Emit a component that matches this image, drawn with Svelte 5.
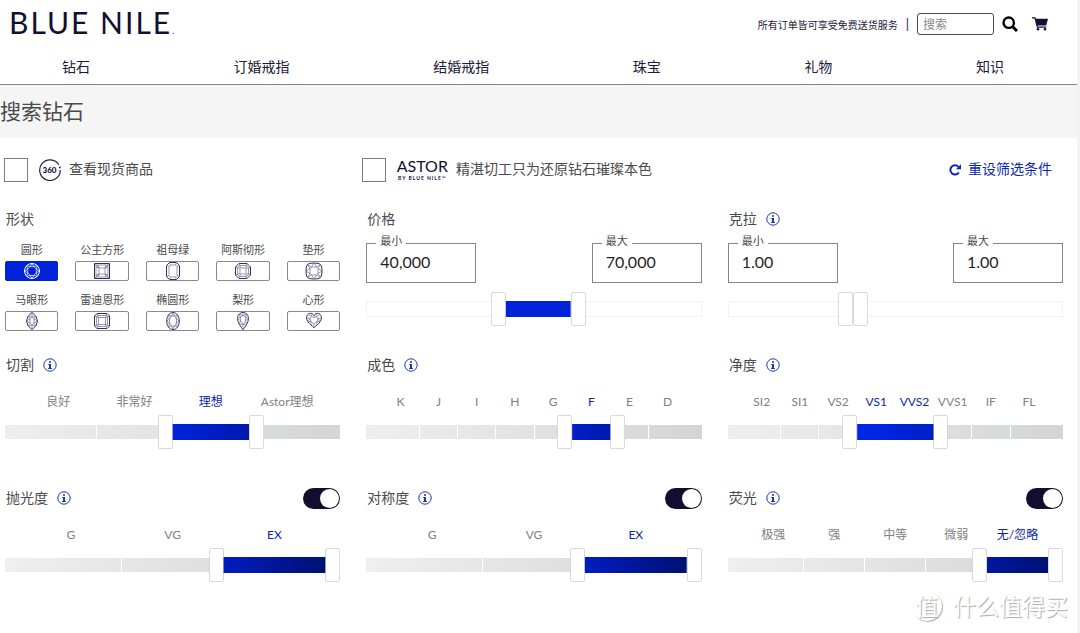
<script lang="ts">
	interface Slider {
		title: string;
		labels: string[];
		low: number;
		high: number;
		toggle?: boolean;
	}

	const navItems = ['钻石', '订婚戒指', '结婚戒指', '珠宝', '礼物', '知识'];

	// outline is the stone's edge, facets are the cut lines inside it
	const shapes = [
		{
			name: '圆形',
			outline: 'M9 1.5a7.5 7.5 0 1 1 0 15a7.5 7.5 0 1 1 0-15z',
			facets:
				'M7.2 4.6h3.6L13.4 7.2v3.6L10.8 13.4H7.2L4.6 10.8V7.2zM7.2 4.6L9 1.5L10.8 4.6L14.3 3.7L13.4 7.2L16.5 9L13.4 10.8L14.3 14.3L10.8 13.4L9 16.5L7.2 13.4L3.7 14.3L4.6 10.8L1.5 9L4.6 7.2L3.7 3.7z'
		},
		{
			name: '公主方形',
			outline: 'M1.5 1.5h15v15h-15z',
			facets:
				'M3 3h12v12H3zM6 6h6v6H6zM1.5 1.5L6 6M16.5 1.5L12 6M1.5 16.5L6 12M16.5 16.5L12 12M3 5L6 6L5 3M13 3L12 6L15 5M3 13L6 12L5 15M13 15L12 12L15 13'
		},
		{
			name: '祖母绿',
			outline: 'M5.5 .5h7L15.5 3.5v11L12.5 17.5h-7L2.5 14.5v-11z',
			facets:
				'M6.5 3h5L13 4.5v9L11.5 15h-5L5 13.5v-9zM5.5 .5L6.5 3M12.5 .5L11.5 3M2.5 3.5L5 4.5M15.5 3.5L13 4.5M2.5 14.5L5 13.5M15.5 14.5L13 13.5M5.5 17.5L6.5 15M12.5 17.5L11.5 15'
		},
		{
			name: '阿斯彻形',
			outline: 'M5 1.5h8L16.5 5v8L13 16.5H5L1.5 13V5z',
			facets:
				'M5.5 3.5h7l2 2v7l-2 2h-7l-2-2v-7zM6.5 6h5L12 6.5v5L11.5 12h-5L6 11.5v-5zM5 1.5L6.5 6M13 1.5L11.5 6M1.5 5L6 6.5M16.5 5L12 6.5M5 16.5L6.5 12M13 16.5L11.5 12M1.5 13L6 11.5M16.5 13L12 11.5'
		},
		{
			name: '垫形',
			outline:
				'M5 1.3Q9 .7 13 1.3Q16.2 1.8 16.7 5Q17.3 9 16.7 13Q16.2 16.2 13 16.7Q9 17.3 5 16.7Q1.8 16.2 1.3 13Q.7 9 1.3 5Q1.8 1.8 5 1.3z',
			facets:
				'M6.5 5h5L13 6.5v5L11.5 13h-5L5 11.5v-5zM6.5 5L9 1L11.5 5L15.5 2.5L13 6.5L17 9L13 11.5L15.5 15.5L11.5 13L9 17L6.5 13L2.5 15.5L5 11.5L1 9L5 6.5L2.5 2.5z'
		},
		{
			name: '马眼形',
			outline: 'M9 .3Q14.5 4.5 14.5 9T9 17.7Q3.5 13.5 3.5 9T9 .3z',
			facets:
				'M9 5L11 7v4L9 13L7 11V7zM9 .3V5M9 13v4.7M3.5 9L7 7L5 4L9 5L13 4L11 7L14.5 9L11 11L13 14L9 13L5 14L7 11z'
		},
		{
			name: '雷迪恩形',
			outline: 'M4 1.5h10L16.5 4v10L14 16.5H4L1.5 14V4z',
			facets:
				'M4.5 3.5h9l1 1v9l-1 1h-9l-1-1v-9zM5.5 5.5h7v7h-7zM4 1.5L5.5 5.5L1.5 4M14 1.5L12.5 5.5L16.5 4M4 16.5L5.5 12.5L1.5 14M14 16.5L12.5 12.5L16.5 14'
		},
		{
			name: '椭圆形',
			outline: 'M9 .5C13 .5 15.3 4.5 15.3 9S13 17.5 9 17.5S2.7 13.5 2.7 9S5 .5 9 .5z',
			facets:
				'M7.5 4h3L12.5 7v4L10.5 14h-3L5.5 11V7zM7.5 4L9 .5L10.5 4L13.5 3.5L12.5 7L15.3 9L12.5 11L13.5 14.5L10.5 14L9 17.5L7.5 14L4.5 14.5L5.5 11L2.7 9L5.5 7L4.5 3.5z'
		},
		{
			name: '梨形',
			outline:
				'M9 .5C12.5 .5 14.5 3.5 14.5 6.5C14.5 10.5 11 15 9 17.7C7 15 3.5 10.5 3.5 6.5C3.5 3.5 5.5 .5 9 .5z',
			facets:
				'M9 3.5L11.5 5v3.5L9 12.5L6.5 8.5V5zM9 .5v3M9 12.5v5M3.5 6.5L6.5 5L5 2L9 3.5L13 2L11.5 5L14.5 6.5L11.5 8.5L12.5 12L9 12.5L5.5 12L6.5 8.5z'
		},
		{
			name: '心形',
			outline:
				'M9 3.5C10.5 .8 13.5 .8 15 2.3C17.3 4.7 16.5 7.5 15 9.7C13.5 12 11 13.8 9 15.7C7 13.8 4.5 12 3 9.7C1.5 7.5 .7 4.7 3 2.3C4.5 .8 7.5 .8 9 3.5z',
			facets:
				'M9 5.5L11.5 4.5L13 6.5L12 9.5L9 12L6 9.5L5 6.5L6.5 4.5zM9 3.5v2M9 12v3.5M3 2.3L6.5 4.5L7 1.5M15 2.3L11.5 4.5L11 1.5M1.5 6L5 6.5L3 9.7L6 9.5L6 13M16.5 6L13 6.5L15 9.7L12 9.5L12 13'
		}
	];

	let selected = $state(['圆形']);

	let ranges = $state([
		{ title: '价格', info: false, min: '40,000', max: '70,000', low: 408, high: 620 },
		{ title: '克拉', info: true, min: '1.00', max: '1.00', low: 360, high: 360 }
	]);

	let sliders: Slider[] = $state([
		{ title: '切割', labels: ['良好', '非常好', '理想', 'Astor理想'], low: 2, high: 3 },
		{ title: '成色', labels: ['K', 'J', 'I', 'H', 'G', 'F', 'E', 'D'], low: 5, high: 6 },
		{
			title: '净度',
			labels: ['SI2', 'SI1', 'VS2', 'VS1', 'VVS2', 'VVS1', 'IF', 'FL'],
			low: 3,
			high: 5
		},
		{ title: '抛光度', labels: ['G', 'VG', 'EX'], low: 2, high: 3, toggle: true },
		{ title: '对称度', labels: ['G', 'VG', 'EX'], low: 2, high: 3, toggle: true },
		{
			title: '荧光',
			labels: ['极强', '强', '中等', '微弱', '无/忽略'],
			low: 4,
			high: 5,
			toggle: true
		}
	]);

	function toggleShape(name: string) {
		selected = selected.includes(name) ? selected.filter((s) => s !== name) : [...selected, name];
	}
</script>

{#snippet infoIcon(title: string)}
	<button class="info" aria-label="{title}说明">
		<svg viewBox="0 0 14 14" width="14" height="14">
			<circle cx="7" cy="7" r="6.2" fill="none" stroke="currentColor" />
			<path d="M6 3.2h2v1.6H6zM5.3 5.9H8v4h.9v1H5.1v-1H6V6.9h-.7z" fill="currentColor" />
		</svg>
	</button>
{/snippet}

<div class="page">
	<header>
		<div class="top">
			<a class="logo" href="#home">BLUE NILE<small>.</small></a>
			<div class="tools">
				<span>所有订单皆可享受免费送货服务</span>
				<span class="divider">|</span>
				<input type="search" placeholder="搜索" aria-label="搜索" />
				<button class="search" aria-label="提交搜索">
					<svg viewBox="0 0 16 16" width="16" height="16">
						<circle cx="6.7" cy="6.7" r="5.2" fill="none" stroke="#000" stroke-width="2.4" />
						<path d="M10.5 10.5L15 15" stroke="#000" stroke-width="3" />
					</svg>
				</button>
				<a href="#cart" aria-label="购物车">
					<svg viewBox="0 0 16 14" width="16" height="14">
						<path
							d="M0 .3h3.4l.6 1.5H16l-1.8 6.7H5.6l.3 1h8.3v1.2H4.9L2.5 1.5H0z"
							fill="#130f32"
						/>
						<circle cx="6" cy="12.3" r="1.3" fill="#130f32" />
						<circle cx="13" cy="12.3" r="1.3" fill="#130f32" />
					</svg>
				</a>
			</div>
		</div>
		<nav>
			{#each navItems as item}
				<a href="#{item}">{item}</a>
			{/each}
		</nav>
	</header>

	<h1>搜索钻石</h1>

	<main>
		<div class="options">
			<label>
				<input class="tick" type="checkbox" />
				<svg class="spin" viewBox="0 0 22 22" width="22" height="22">
					<path
						d="M19.8 5.8A10.3 10.3 0 1 0 21.3 11"
						fill="none"
						stroke="#252244"
						stroke-width="1.2"
					/>
					<circle cx="20.8" cy="8.6" r="1" fill="#252244" />
					<text x="10.5" y="14" text-anchor="middle">360</text>
				</svg>
				<span class="caption">查看现货商品</span>
			</label>
			<label>
				<input class="tick" type="checkbox" />
				<span class="astor">ASTOR<small>BY BLUE NILE™</small></span>
				<span class="caption">精湛切工只为还原钻石璀璨本色</span>
			</label>
			<button class="reset">
				<svg viewBox="0 0 12 12" width="12" height="12">
					<path
						d="M9.8 8.5A4.6 4.6 0 1 1 9.4 2.9"
						fill="none"
						stroke="currentColor"
						stroke-width="2"
					/>
					<path d="M12 .2v5H7z" fill="currentColor" />
				</svg>
				<span class="caption">重设筛选条件</span>
			</button>
		</div>

		<div class="filters">
			<section>
				<h2>形状</h2>
				<div class="shapes">
					{#each shapes as shape}
						<button
							class="shape"
							class:selected={selected.includes(shape.name)}
							aria-pressed={selected.includes(shape.name)}
							onclick={() => toggleShape(shape.name)}
						>
							<span>{shape.name}</span>
							<span class="box">
								<svg viewBox="0 0 18 18" width="18" height="18">
									<path class="outline" d={shape.outline} />
									<path class="facets" d={shape.facets} />
								</svg>
							</span>
						</button>
					{/each}
				</div>
			</section>

			{#each ranges as range}
				<section>
					<h2>
						{range.title}
						{#if range.info}{@render infoIcon(range.title)}{/if}
					</h2>
					<div class="fields">
						<label class="field">
							<span>最小</span>
							<input type="text" bind:value={range.min} />
						</label>
						<label class="field">
							<span>最大</span>
							<input type="text" bind:value={range.max} />
						</label>
					</div>
					<div class="slider" style="--low: {range.low / 1000}; --high: {range.high / 1000}">
						<div class="track plain"></div>
						<div class="fill plain"></div>
						<input
							class="low"
							type="range"
							max="1000"
							aria-label="{range.title}最小"
							bind:value={range.low}
						/>
						<input
							class="high"
							type="range"
							max="1000"
							aria-label="{range.title}最大"
							bind:value={range.high}
						/>
					</div>
				</section>
			{/each}
		</div>

		<div class="filters graded">
			{#each sliders as slider}
				<section>
					<h2>
						{slider.title}
						{@render infoIcon(slider.title)}
						{#if slider.toggle !== undefined}
							<input
								class="toggle"
								type="checkbox"
								role="switch"
								aria-label={slider.title}
								bind:checked={slider.toggle}
							/>
						{/if}
					</h2>
					<div class="labels">
						{#each slider.labels as label, i}
							<span class:active={i >= slider.low && i < slider.high}>{label}</span>
						{/each}
					</div>
					<div
						class="slider"
						style="--low: {slider.low / slider.labels.length}; --high: {slider.high /
							slider.labels.length}"
					>
						<div class="track"></div>
						<div class="fill"></div>
						<div class="steps">
							{#each slider.labels as _}<i></i>{/each}
						</div>
						<input
							class="low"
							type="range"
							max={slider.labels.length}
							aria-label="{slider.title}最低"
							bind:value={slider.low}
						/>
						<input
							class="high"
							type="range"
							max={slider.labels.length}
							aria-label="{slider.title}最高"
							bind:value={slider.high}
						/>
					</div>
				</section>
			{/each}
		</div>
	</main>

	<footer>
		<span class="badge">值</span>
		<span>什么值得买</span>
	</footer>
</div>

<style>
	:global(body) {
		background: #fff;
	}

	.page {
		box-sizing: border-box;
		min-height: 100vh;
		border-right: 3px solid #f3f3f3;
		font-family: Lato, 'Noto Sans CJK SC', sans-serif;
		font-size: 14px;
		color: #4a4a4a;
	}

	button,
	input {
		font: inherit;
		color: inherit;
		margin: 0;
	}

	button {
		padding: 0;
		border: 0;
		background: none;
		cursor: pointer;
	}

	a {
		color: inherit;
		text-decoration: none;
	}

	svg {
		display: block;
	}

	header {
		color: #1c1939;
		border-bottom: 1px solid #858589;
	}

	.top {
		display: flex;
		align-items: center;
		justify-content: space-between;
		height: 48px;
		padding: 0 29px 0 9px;
	}

	.logo {
		padding-top: 4px;
		font-size: 30px;
		line-height: 32px;
		letter-spacing: 2px;
		color: #130f32;
	}

	.logo small {
		font-size: 8px;
	}

	.tools {
		display: flex;
		align-items: center;
		gap: 8px;
		font-size: 10px;
	}

	.divider {
		font-size: 13px;
	}

	.tools input {
		box-sizing: border-box;
		width: 77px;
		height: 22px;
		padding: 0 5px;
		border: 1px solid #4a4762;
		border-radius: 3px;
		background: #fff;
		font-size: 12px;
		appearance: none;
	}

	.tools input::placeholder {
		color: #8a8a8a;
	}

	.search {
		margin-right: 6px;
	}

	nav {
		display: flex;
		align-items: center;
		justify-content: space-between;
		height: 36px;
		padding: 0 73px 0 62px;
	}

	h1 {
		margin: 0;
		padding: 11px 0 13px;
		background: #f5f5f5;
		font-size: 21px;
		line-height: 29px;
		font-weight: 400;
	}

	.options {
		display: grid;
		grid-template-columns: repeat(3, 1fr);
		padding: 20px 0 0 4px;
	}

	.options label {
		display: flex;
		align-items: center;
		white-space: nowrap;
	}

	.caption {
		padding-bottom: 2px;
		line-height: 20px;
	}

	.tick {
		flex: none;
		width: 24px;
		height: 24px;
		margin-right: 11px;
		border: 1px solid #7d7d7d;
		background: #fff;
		appearance: none;
	}

	.tick:checked {
		background: #0022d8;
	}

	.spin {
		margin-right: 8px;
	}

	.spin text {
		font-size: 8px;
		font-weight: 900;
		fill: #130f32;
	}

	.astor {
		display: flex;
		flex-direction: column;
		align-items: center;
		margin-right: 8px;
		font-size: 16px;
		line-height: 16px;
		color: #130f32;
	}

	.astor small {
		font-size: 5px;
		line-height: 8px;
		font-weight: 700;
		letter-spacing: 1px;
	}

	.reset {
		display: flex;
		align-items: center;
		justify-self: end;
		gap: 7px;
		padding-right: 25px;
		color: #0a27b4;
	}

	.filters {
		display: grid;
		grid-template-columns: repeat(3, 1fr);
		gap: 39px 26px;
		padding: 27px 14px 0 5px;
	}

	.filters.graded {
		padding-top: 24px;
	}

	h2 {
		display: flex;
		align-items: center;
		gap: 9px;
		height: 20px;
		margin: 0;
		padding-left: 1px;
		font-size: 14px;
		line-height: 20px;
		font-weight: 400;
	}

	.info {
		color: #1a36b0;
	}

	.shapes {
		display: grid;
		grid-template-columns: repeat(5, 1fr);
		gap: 12px 17px;
		margin-top: 14px;
	}

	.shape {
		display: flex;
		flex-direction: column;
		align-items: stretch;
		gap: 4px;
		font-size: 11px;
		line-height: 14px;
		white-space: nowrap;
	}

	.box {
		display: flex;
		justify-content: center;
		border: 1px solid #8a8a8a;
		border-radius: 2px;
		height: 18px;
	}

	.shape path {
		fill: none;
		stroke: #2f3158;
		stroke-width: 1;
	}

	.shape .facets {
		stroke: #6c7090;
		stroke-width: 0.7;
	}

	.selected .box {
		border-color: #0022d8;
		background: #0022d8;
	}

	.selected .outline,
	.selected .facets {
		stroke: #fff;
	}

	.fields {
		display: flex;
		justify-content: space-between;
		margin-top: 14px;
	}

	.field {
		position: relative;
	}

	.field span {
		position: absolute;
		top: -9px;
		left: 10px;
		padding: 0 4px;
		background: #fff;
		font-size: 11px;
		line-height: 14px;
	}

	.field input {
		display: block;
		box-sizing: border-box;
		width: 110px;
		height: 40px;
		padding: 0 13px 4px;
		border: 1px solid #858585;
		background: #fff;
		font-size: 16px;
		color: #1f1f1f;
	}

	.labels {
		display: flex;
		margin-top: 18px;
		padding: 0 15px;
		font-size: 12px;
		line-height: 18px;
		color: #808080;
	}

	.labels span {
		flex: 1 1 0;
		min-width: 0;
		text-align: center;
		white-space: nowrap;
	}

	.labels .active {
		color: #0a27a8;
	}

	/* Two range inputs share one track, each kept a handle's width short of the far end */
	.slider {
		display: grid;
		align-items: center;
		height: 34px;
		margin-top: 9px;
	}

	.labels + .slider {
		margin-top: 4px;
	}

	.slider > * {
		grid-area: 1 / 1;
	}

	.track {
		height: 14px;
		background: linear-gradient(100deg, #efefef, #e2e2e4 50%, #d3d4d6);
	}

	.track.plain {
		box-sizing: border-box;
		height: 16px;
		border: 1px solid #f2f2f2;
		background: #fff;
	}

	.fill {
		height: 16px;
		background: linear-gradient(100deg, #0026e4 45%, #001ab4 70%, #000e66);
		clip-path: inset(
			0 calc((100% - 30px) * (1 - var(--high)) + 15px) 0 calc((100% - 30px) * var(--low) + 15px)
		);
	}

	.fill.plain {
		background: #0022d8;
	}

	.steps {
		display: flex;
		height: 16px;
		padding: 0 15px;
	}

	.steps i {
		flex: 1;
		border-right: 1px solid #fff;
	}

	.steps i:last-child {
		border: 0;
	}

	.slider input {
		appearance: none;
		min-width: 0;
		height: 34px;
		background: none;
		pointer-events: none;
	}

	.slider .low {
		margin-right: 15px;
	}

	.slider .high {
		margin-left: 15px;
	}

	.slider input::-webkit-slider-thumb {
		appearance: none;
		box-sizing: border-box;
		width: 15px;
		height: 34px;
		border: 1px solid #d9d9dc;
		border-radius: 2px;
		background: #fff;
		cursor: pointer;
		pointer-events: auto;
	}

	.toggle {
		display: flex;
		align-items: center;
		flex: none;
		box-sizing: border-box;
		width: 37px;
		height: 21px;
		margin-left: auto;
		padding: 1px;
		border-radius: 11px;
		background: #9a9a9a;
		appearance: none;
		cursor: pointer;
	}

	.toggle::before {
		content: '';
		width: 19px;
		height: 19px;
		border-radius: 50%;
		background: #fff;
	}

	.toggle:checked {
		justify-content: flex-end;
		background: #130d30;
	}

	footer {
		display: flex;
		align-items: center;
		justify-content: flex-end;
		gap: 11px;
		padding: 9px 9px 0 0;
		font-size: 23px;
		line-height: 30px;
		color: #fff;
		text-shadow: 1px 1px 1px #a8a8a8;
	}

	.badge {
		width: 30px;
		height: 30px;
		border-radius: 50%;
		box-shadow: 1px 1px 1px #b4b4b4;
		text-align: center;
	}
</style>
